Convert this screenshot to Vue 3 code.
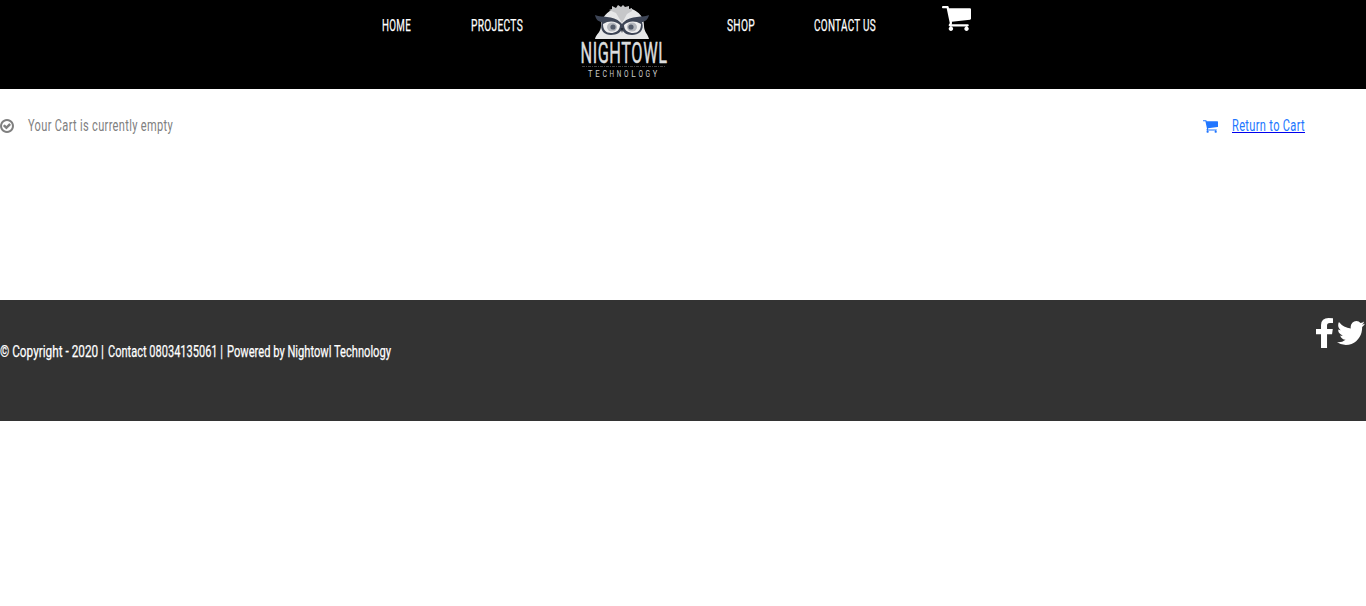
<script setup>
import { h } from 'vue'

// Condensed lettering: the text is fitted to a fixed advance width.
const Fit = (props) =>
  h('svg', { width: props.w, height: 24, viewBox: `0 0 ${props.w} 24`, overflow: 'visible' }, [
    h('text', { x: 0, y: 18, textLength: props.w, lengthAdjust: 'spacingAndGlyphs', fill: 'currentColor' }, props.text),
  ])
Fit.props = ['w', 'text']

const left = [{ text: 'HOME', w: 29 }, { text: 'PROJECTS', w: 52 }]
const right = [{ text: 'SHOP', w: 28 }, { text: 'CONTACT US', w: 62 }]
const copyright = [
  { text: '© Copyright - 2020 |', w: 104 },
  { text: 'Contact 08034135061 |', w: 115 },
  { text: 'Powered by Nightowl Technology', w: 164 },
]
const cart =
  'M640 1536q0 52-38 90t-90 38-90-38-38-90 38-90 90-38 90 38 38 90zm896 0q0 52-38 90t-90 38-90-38-38-90 38-90 90-38 90 38 38 90zm128-1088v512q0 24-16.5 42.5t-40.5 21.5l-1044 122q13 60 13 70 0 16-24 64h920q26 0 45 19t19 45-19 45-45 19h-1024q-26 0-45-19t-19-45q0-11 8-31.5t16-36 21.5-40 15.5-29.5l-177-823h-204q-26 0-45-19t-19-45 19-45 45-19h256q16 0 28.5 6.5t19.5 15.5 13 24.5 8 26 5.5 29.5 4.5 26h1201q26 0 45 19t19 45z'
</script>

<template>
  <div class="page">
    <header>
      <nav>
        <a v-for="i in left" :key="i.text" class="link"><Fit :w="i.w" :text="i.text" /></a>
        <svg class="logo" width="88" height="78" viewBox="-1 0 88 78">
          <path d="M14 34C15 29 20 27 20 21C20 12 27 6 33 4L51 4C58 7 63 12 63 21C63 27 67 29 68 34Z" fill="#e6e7e8" />
          <path d="M28 5L31 4L31 1L35 3L37 0L40 2L42 0L44 2L48 1L48 4L51 3L51 6L46 9L41 18L35 8Z" fill="#c6c7c9" />
          <path d="M14 10C22 13 34 10 41 19C48 10 60 13 68 10C67 15 63 17 61 17C64 26 57 30 51 30C45 30 42 27 41 24C40 27 36 30 30 30C24 30 18 26 21 17C18 17 15 15 14 10Z" fill="#3d4556" />
          <path d="M22 19C28 15 35 16 39 20C39 26 34 28 30 28C25 28 22 25 22 19Z" fill="#eeeeef" />
          <path d="M60 19C54 15 47 16 43 20C43 26 48 28 52 28C57 28 60 25 60 19Z" fill="#eeeeef" />
          <ellipse cx="31" cy="22" rx="5" ry="4.500" fill="#b5b8be" />
          <ellipse cx="51" cy="22" rx="5" ry="4.500" fill="#b5b8be" />
          <circle cx="32" cy="22" r="2.600" fill="#555d6c" />
          <circle cx="50" cy="22" r="2.600" fill="#555d6c" />
          <path d="M39.500 23H42.500L41 28Z" fill="#222936" />
          <text class="brand" x="-0.500" y="57.500" textLength="87" lengthAdjust="spacingAndGlyphs">NIGHTOWL</text>
          <path d="M1 61.500H85" stroke="#444" stroke-width="1" stroke-dasharray="3 1 1 1" />
          <g class="sub">
            <text v-for="(c, n) in 'TECHNOLOGY'" :key="n" :x="7 + n * 7.200" y="71.500" textLength="4.500" lengthAdjust="spacingAndGlyphs">{{ c }}</text>
          </g>
        </svg>
        <a v-for="i in right" :key="i.text" class="link"><Fit :w="i.w" :text="i.text" /></a>
        <svg class="nav-cart" width="29" height="25" viewBox="0 256 1664 1408" preserveAspectRatio="none"><path :d="cart" fill="#fff" /></svg>
      </nav>
    </header>
    <main>
      <div class="notice">
        <svg width="14" height="14" viewBox="128 128 1536 1536"><path fill="currentColor" d="M1299 813l-422 422q-19 19-45 19t-45-19l-294-294q-19-19-19-45t19-45l102-102q19-19 45-19t45 19l147 147 275-275q19-19 45-19t45 19l102 102q19 19 19 45t-19 45zm141 83q0-148-73-273t-198-198-273-73-273 73-198 198-73 273 73 273 198 198 273 73 273-73 198-198 73-273zm224 0q0 209-103 385.500t-279.500 279.500-385.500 103-385.500-103-279.500-279.500-103-385.500 103-385.500 279.500-279.500 385.500-103 385.500 103 279.500 279.500 103 385.500z" /></svg>
        <Fit :w="145" text="Your Cart is currently empty" />
      </div>
      <div class="return">
        <svg width="15" height="13" viewBox="0 256 1664 1408"><path :d="cart" fill="currentColor" /></svg>
        <a><Fit :w="73" text="Return to Cart" /></a>
      </div>
    </main>
    <footer>
      <p><Fit v-for="i in copyright" :key="i.text" :w="i.w" :text="i.text" /></p>
      <div class="social">
        <svg width="17" height="30" viewBox="479 0 864 1664" preserveAspectRatio="none"><path fill="#fff" d="M1343 12v264h-157q-86 0-116 36t-30 108v189h293l-39 296h-254v759h-306v-759h-255v-296h255v-218q0-186 104-288.500t277-102.500q147 0 228 12z" /></svg>
        <svg width="28" height="24" viewBox="108 256 1576 1280" preserveAspectRatio="none"><path fill="#fff" d="M1684 408q-67 98-162 167 1 14 1 42 0 130-38 259.500t-115.500 248.500-184.500 210.500-258 146-323 54.500q-271 0-496-145 35 4 78 4 225 0 401-138-105-2-188-64.500t-114-159.500q33 5 61 5 43 0 85-11-112-23-185.500-111.500t-73.500-205.500v-4q68 38 146 41-66-44-105-115t-39-154q0-88 44-163 121 149 294.500 238.500t371.500 99.500q-8-38-8-74 0-134 94.500-228.500t228.500-94.500q140 0 236 102 109-21 205-78-37 115-142 178 93-10 186-50z" /></svg>
      </div>
    </footer>
  </div>
</template>

<style scoped>
.page { font-family: Roboto, "Liberation Sans", sans-serif; font-size: 17px; letter-spacing: 0.5px; background: #fff; min-height: 606px; }
svg { display: block; flex: none; overflow: visible; }
header { height: 89px; background: #000; color: #fff; }
nav { display: flex; align-items: flex-start; padding-left: 382px; }
.link { margin: 13px 60px 0 0; }
.link:nth-of-type(2) { margin-right: 59px; }
.link:nth-of-type(3) { margin-right: 59px; }
.logo { margin: 5px 59px 0 -2px; }
.brand { font-size: 30px; fill: #dcddde; stroke: #dcddde; stroke-width: 0.500px; letter-spacing: 1px; }
.sub { font-size: 9.500px; fill: #ccc; letter-spacing: 0; }
.nav-cart { margin: 6px 0 0 6px; }
main { height: 211px; display: flex; justify-content: space-between; align-items: flex-start; padding: 24px 61px 0 0; box-sizing: border-box; }
.notice, .return { display: flex; gap: 14px; align-items: flex-start; }
.notice { color: #808080; }
.notice > svg:first-child { margin-top: 6px; }
.return { color: #2176ff; }
.return a { border-bottom: 1px solid #0000ee; height: 19px; }
.return > svg { margin-top: 7px; }
footer { height: 121px; background: #333; color: #fff; display: flex; justify-content: space-between; align-items: flex-start; }
footer, header { stroke-width: 0.250px; }
footer p, .link { stroke: #fff; }
footer p { display: flex; gap: 4px; margin: 39px 0 0; letter-spacing: 0; }
.social { display: flex; gap: 4px; padding: 18px 1px 0 0; align-items: center; }
</style>

<style>
body { background: #fff; }
</style>
